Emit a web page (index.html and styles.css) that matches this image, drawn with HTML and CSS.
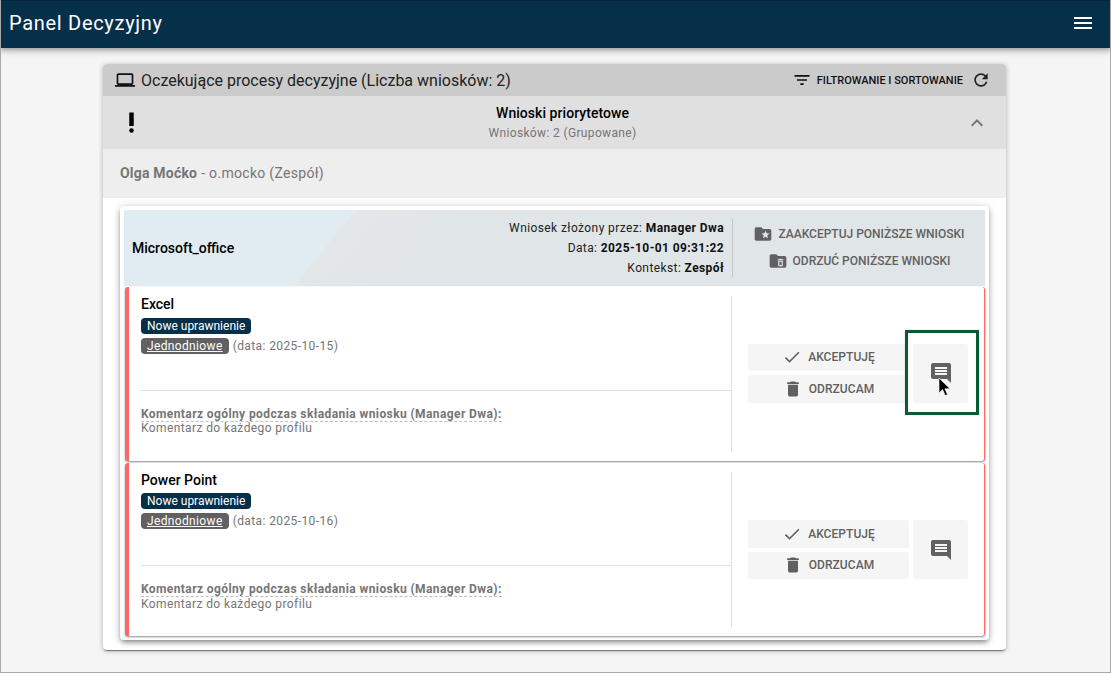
FILE: index.html
```html
<!DOCTYPE html>
<html lang="pl">
<head>
<meta charset="utf-8">
<title>Panel Decyzyjny</title>
<link rel="stylesheet" href="styles.css">
</head>
<body>
<div class="frame">
  <header class="toolbar">
    <span class="app-title">Panel Decyzyjny</span>
    <svg class="menu-icon" viewBox="0 0 24 24"><path d="M3 18h18v-2H3v2zm0-5h18v-2H3v2zm0-7v2h18V6H3z"/></svg>
  </header>
  <main class="content">
    <section class="panel">
      <div class="panel-head">
        <svg class="ico-laptop" viewBox="0 0 24 24"><path d="M20 18c1.1 0 1.99-.9 1.99-2L22 6c0-1.1-.9-2-2-2H4c-1.1 0-2 .9-2 2v10c0 1.1.9 2 2 2H0v2h24v-2h-4zM4 6h16v10H4V6z"/></svg>
        <span class="panel-title">Oczekujące procesy decyzyjne (Liczba wniosków: 2)</span>
        <svg class="ico-filter" viewBox="0 0 24 24"><path d="M10 18h4v-2h-4v2zM3 6v2h18V6H3zm3 7h12v-2H6v2z"/></svg>
        <span class="filter-label">FILTROWANIE I SORTOWANIE</span>
        <svg class="ico-refresh" viewBox="0 0 24 24"><path d="M17.65 6.35C16.2 4.9 14.21 4 12 4c-4.42 0-7.99 3.58-7.99 8s3.57 8 7.99 8c3.73 0 6.84-2.55 7.73-6h-2.08c-.82 2.33-3.04 4-5.65 4-3.31 0-6-2.69-6-6s2.69-6 6-6c1.66 0 3.14.69 4.22 1.78L13 11h7V4l-2.35 2.35z"/></svg>
      </div>
      <div class="group-head">
        <svg class="ico-priority" viewBox="0 0 24 24"><circle cx="12" cy="19" r="2"/><path d="M10 3h4v12h-4z"/></svg>
        <div class="group-text">
          <div class="group-title">Wnioski priorytetowe</div>
          <div class="group-sub">Wniosków: 2 (Grupowane)</div>
        </div>
        <svg class="ico-chevron" viewBox="0 0 24 24"><path d="M12 8l-6 6 1.41 1.41L12 10.83l4.59 4.58L18 14z"/></svg>
      </div>
      <div class="person"><b>Olga Moćko</b> - o.mocko (Zespół)</div>
      <div class="panel-body">
        <div class="card">
          <div class="card-head">
            <div class="card-name">Microsoft_office</div>
            <div class="card-meta">
              <div>Wniosek złożony przez: <b>Manager Dwa</b></div>
              <div>Data: <b>2025-10-01 09:31:22</b></div>
              <div>Kontekst: <b>Zespół</b></div>
            </div>
            <div class="card-actions">
              <div class="bulk">
                <svg viewBox="0 0 24 24"><path d="M20 6h-8l-2-2H4c-1.1 0-1.99.9-1.99 2L2 18c0 1.1.9 2 2 2h16c1.1 0 2-.9 2-2V8c0-1.1-.9-2-2-2zm-2.06 11L15 15.28 12.06 17l.78-3.33-2.59-2.24 3.41-.29L15 8l1.34 3.14 3.41.29-2.59 2.24.78 3.33z"/></svg>
                <span>ZAAKCEPTUJ PONIŻSZE WNIOSKI</span>
              </div>
              <div class="bulk">
                <svg viewBox="0 0 24 24"><path fill-rule="evenodd" d="M20 6h-8l-2-2H4c-1.1 0-1.99.9-1.99 2L2 18c0 1.1.9 2 2 2h16c1.1 0 2-.9 2-2V8c0-1.1-.9-2-2-2zM11.500 9.800h2l.5-.5h2l.5.5h2V11h-7V9.800zM12.200 11.700h5.600V17c0 .7-.5 1.200-1.200 1.200h-3.200c-.7 0-1.200-.5-1.200-1.200v-5.300zM13.600 13v3.900h2.800V13h-2.800z"/></svg>
                <span>ODRZUĆ PONIŻSZE WNIOSKI</span>
              </div>
            </div>
          </div>

          <article class="req">
            <div class="req-main">
              <div class="req-name">Excel</div>
              <div class="tag-row"><span class="tag tag-navy">Nowe uprawnienie</span></div>
              <div class="tag-row"><span class="tag tag-grey"><u>Jednodniowe</u></span><span class="req-date">(data: 2025-10-15)</span></div>
              <div class="req-note">
                <div class="note-title"><span>Komentarz ogólny podczas składania wniosku (Manager Dwa):</span></div>
                <div class="note-text">Komentarz do każdego profilu</div>
              </div>
            </div>
            <div class="req-side">
              <div class="btn-stack">
                <button class="btn"><svg viewBox="0 0 24 24"><path d="M9 16.17L4.830 12l-1.420 1.410L9 19 21 7l-1.410-1.410z"/></svg>AKCEPTUJĘ</button>
                <button class="btn"><svg viewBox="0 0 24 24"><path d="M6 19c0 1.100.9 2 2 2h8c1.100 0 2-.9 2-2V7H6v12zM19 4h-3.500l-1-1h-5l-1 1H5v2h14V4z"/></svg>ODRZUCAM</button>
              </div>
              <div class="comment-wrap">
                <div class="highlight"></div>
                <button class="btn-comment"><svg viewBox="0 0 24 24"><path d="M21.990 4c0-1.100-.89-2-1.990-2H4c-1.100 0-2 .9-2 2v12c0 1.100.9 2 2 2h14l4 4-.01-18zM18 14H6v-2h12v2zm0-3H6V9h12v2zm0-3H6V6h12v2z"/></svg></button>
                <svg class="cursor" viewBox="0 0 14 20"><path d="M1 1v15l3.600-3.400 2.600 6 2.300-1-2.600-5.800H12z" fill="#000" stroke="#fff" stroke-width=".6"/></svg>
              </div>
            </div>
          </article>

          <article class="req">
            <div class="req-main">
              <div class="req-name">Power Point</div>
              <div class="tag-row"><span class="tag tag-navy">Nowe uprawnienie</span></div>
              <div class="tag-row"><span class="tag tag-grey"><u>Jednodniowe</u></span><span class="req-date">(data: 2025-10-16)</span></div>
              <div class="req-note">
                <div class="note-title"><span>Komentarz ogólny podczas składania wniosku (Manager Dwa):</span></div>
                <div class="note-text">Komentarz do każdego profilu</div>
              </div>
            </div>
            <div class="req-side">
              <div class="btn-stack">
                <button class="btn"><svg viewBox="0 0 24 24"><path d="M9 16.17L4.830 12l-1.420 1.410L9 19 21 7l-1.410-1.410z"/></svg>AKCEPTUJĘ</button>
                <button class="btn"><svg viewBox="0 0 24 24"><path d="M6 19c0 1.100.9 2 2 2h8c1.100 0 2-.9 2-2V7H6v12zM19 4h-3.500l-1-1h-5l-1 1H5v2h14V4z"/></svg>ODRZUCAM</button>
              </div>
              <div class="comment-wrap">
                <button class="btn-comment"><svg viewBox="0 0 24 24"><path d="M21.990 4c0-1.100-.89-2-1.990-2H4c-1.100 0-2 .9-2 2v12c0 1.100.9 2 2 2h14l4 4-.01-18zM18 14H6v-2h12v2zm0-3H6V9h12v2zm0-3H6V6h12v2z"/></svg></button>
              </div>
            </div>
          </article>
        </div>
      </div>
    </section>
  </main>
</div>
</body>
</html>
```
FILE: styles.css
```css
* { box-sizing: border-box; }
html, body { margin: 0; height: 100%; }
body { font-family: Roboto, "Liberation Sans", sans-serif; color: #000; background: #f5f5f5; overflow: hidden; }
.frame { position: relative; width: 1111px; height: 673px; border: 1px solid #a9a9a9; border-top: 0; background: #f5f5f5; overflow: hidden; }

.toolbar { display: flex; align-items: center; justify-content: space-between; height: 48px; margin: 0 -1px; padding: 0 16px 4px 9px; background: #062f4a; border-top: 1px solid #03243a; color: #fff; box-shadow: 0 2px 4px -1px rgba(0,0,0,.2), 0 4px 5px rgba(0,0,0,.14), 0 1px 10px rgba(0,0,0,.12); position: relative; }
.app-title { font-size: 20px; letter-spacing: .7px; font-weight: 400; }
.menu-icon { width: 24px; height: 24px; fill: #fff; }

.content { padding: 16px 104px 0 102px; }
.panel { height: 586px; border-radius: 4px; background: #fff; box-shadow: 0 2px 1px -1px rgba(0,0,0,.45), 0 1px 4px 1px rgba(0,0,0,.2); overflow: hidden; }
.panel-head { display: flex; align-items: center; height: 32px; padding: 0 15px 0 12px; background: #cbcbcb; }
.ico-laptop { width: 20px; height: 20px; margin-right: 6px; fill: #111; }
.panel-title { flex: 1; font-size: 16px; color: #222; }
.ico-filter { width: 20px; height: 20px; fill: #111; margin-right: 5px; }
.filter-label { font-size: 11px; font-weight: 500; color: #111; margin-right: 8px; }
.ico-refresh { width: 20px; height: 20px; fill: #222; }

.group-head { display: flex; align-items: center; height: 53px; padding: 0 17px 0 15px; background: #e0e0e0; }
.ico-priority { width: 27px; height: 27px; fill: #000; }
.group-text { flex: 1; text-align: center; padding-left: 15px; }
.group-title { font-size: 14px; font-weight: 500; line-height: 20px; margin-bottom: 1px; letter-spacing: .05px; }
.group-sub { font-size: 12px; letter-spacing: .35px; color: #757575; line-height: 18px; }
.ico-chevron { width: 24px; height: 24px; fill: #757575; }

.person { display: flex; align-items: center; gap: 4px; height: 49px; padding: 0 17px 2px; background: #eee; font-size: 14px; color: #757575; letter-spacing: .3px; }
.person b { letter-spacing: .2px; }
.panel-body { padding: 8px 17px 0; }

.card { height: 434px; padding: 4px; border-radius: 4px; background: #fff; box-shadow: 0 3px 5px -1px rgba(0,0,0,.4), 0 1px 8px rgba(0,0,0,.2); }
.card-head { display: flex; align-items: center; height: 76px; padding: 0 0 0 8px; margin-bottom: 1px; background: linear-gradient(129deg, #e0ebf2 180px, #e4e7e8 180px, #e0e5e8 270px, transparent 270px), linear-gradient(221deg, transparent 476px, #e5e8e9 476px), #e0e5e8; }
.card-name { flex: 1; font-size: 14px; font-weight: 500; }
.card-meta { font-size: 12px; line-height: 20px; letter-spacing: .4px; text-align: right; color: #222; padding-right: 8px; }
.card-meta b { font-weight: 700; color: #111; }
.card-actions { display: flex; flex-direction: column; align-items: center; justify-content: center; gap: 9px; width: 253px; height: 58px; padding-bottom: 2px; border-left: 1px solid #c4c8cb; }
.bulk { display: flex; align-items: center; gap: 5px; font-size: 12px; font-weight: 500; color: #616161; height: 18px; }
.bulk svg { width: 20px; height: 20px; fill: #616161; }

.req { display: flex; height: 174px; margin: 0 0 2px 1px; padding: 9px 0; background: #fff; border-left: 4px solid #f66; border-right: 1px solid #f66; border-radius: 3px; box-shadow: 0 1px 2px rgba(0,0,0,.45); }
.req:last-child { height: 173px; margin-bottom: 0; }
.req:last-child .req-name { margin-bottom: 2px; }
.req:last-child .note-text { margin-top: 1px; }
.req:first-of-type .req-side { padding-bottom: 2px; }
.req-main { display: flex; flex-direction: column; width: 603px; padding-left: 12px; border-right: 1px solid #e0e0e0; }
.req-name { font-size: 14px; font-weight: 500; line-height: 18px; margin: -1px 0 3px; }
.tag-row { height: 20px; font-size: 12px; display: flex; align-items: center; gap: 4px; }
.tag { display: inline-block; height: 16px; line-height: 16px; padding: 0 6px; border-radius: 4px; color: #fff; }
.tag-navy { background: #062f4a; }
.tag-grey { background: #616161; letter-spacing: .35px; }
.req-date { color: #757575; letter-spacing: .4px; }
.req-note { margin-top: 34px; padding-top: 16px; border-top: 1px solid #e0e0e0; font-size: 12px; letter-spacing: .4px; color: #757575; }
.note-title { line-height: 14px; font-weight: 700; }
.note-title span { border-bottom: 1px dashed #bdbdbd; display: inline-block; }
.note-text { line-height: 12px; }

.req-side { flex: 1; display: flex; align-items: center; gap: 4px; padding-left: 16px; }
.btn-stack { display: flex; flex-direction: column; gap: 4px; width: 161px; height: 59px; }
.btn { display: flex; align-items: center; justify-content: center; gap: 6px; flex: 1; width: 100%; padding: 0; border: 0; border-radius: 3px; background: #f5f5f5; font-family: inherit; font-size: 12px; font-weight: 500; letter-spacing: .05px; color: #616161; }
.btn svg { width: 20px; height: 20px; fill: #616161; }
.comment-wrap { position: relative; width: 55px; height: 59px; }
.btn-comment { position: relative; display: flex; align-items: center; justify-content: center; width: 55px; height: 59px; padding: 0; border: 0; border-radius: 3px; background: #f5f5f5; }
.btn-comment svg { width: 24px; height: 24px; fill: #616161; }

.highlight { position: absolute; left: -8px; right: -11px; top: -14px; bottom: -12px; background: #fff; border: 3px solid #0a5a33; box-shadow: 0 0 1px #bbb; }
.cursor { position: absolute; left: 25px; top: 33px; width: 14px; height: 20px; }
```
